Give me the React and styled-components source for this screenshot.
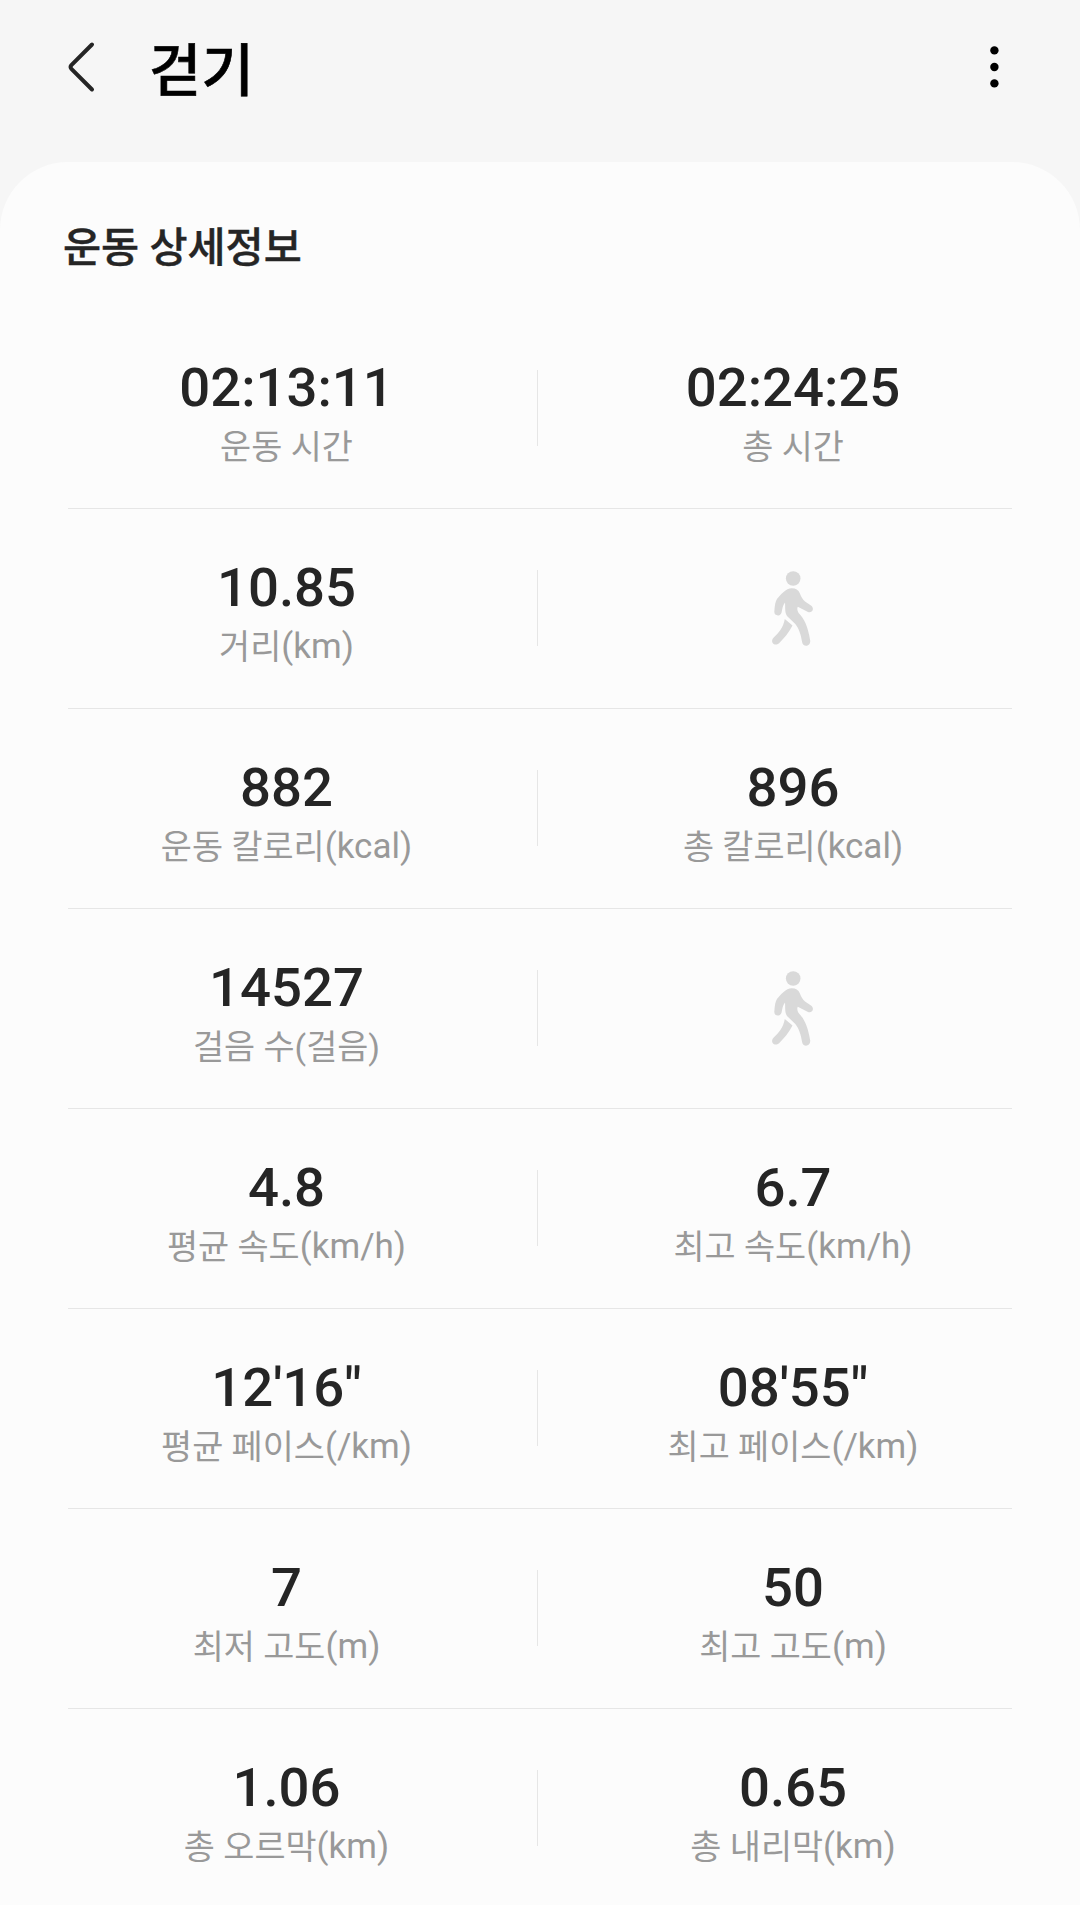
import styled, { createGlobalStyle } from "styled-components";

const GlobalStyle = createGlobalStyle`
  * {
    box-sizing: border-box;
  }
  body {
    margin: 0;
    background: #f6f6f6;
    font-family: Roboto, "Noto Sans CJK KR", sans-serif;
  }
`;

const Page = styled.div`
  width: 1080px;
  height: 1905px;
  overflow: hidden;
  display: flex;
  flex-direction: column;
`;

const Header = styled.header`
  display: flex;
  align-items: center;
  height: 162px;
  padding: 0 76px 28px 59px;
  flex-shrink: 0;
`;

const IconButton = styled.button`
  display: flex;
  padding: 0;
  border: 0;
  background: none;
  cursor: pointer;
`;

const Title = styled.h1`
  flex-grow: 1;
  margin: 0 0 0 46px;
  padding-top: 9px;
  font-size: 57px;
  line-height: 80px;
  font-weight: 500;
  color: #000;
  -webkit-text-stroke: 0.6px #000;
`;

const Card = styled.main`
  flex-grow: 1;
  background: #fcfcfc;
  border-radius: 68px 68px 0 0;
`;

const CardTitle = styled.h2`
  height: 147px;
  margin: 0;
  padding: 56px 0 0 63px;
  font-size: 41.4px;
  line-height: 60px;
  font-weight: 500;
  color: #252525;
  -webkit-text-stroke: 0.4px #252525;
`;

const Row = styled.section`
  display: grid;
  grid-template-columns: 501px 1px 1fr;
  height: 200px;
  padding: 0 32px 0 36px;
`;

const RowLine = styled.hr`
  height: 1px;
  margin: -1px 68px 0;
  border: 0;
  background: #e6e6e6;
`;

const Separator = styled.div`
  height: 76px;
  margin-top: 61px;
  background: #e6e6e6;
`;

const Cell = styled.div`
  display: flex;
  flex-direction: column;
  align-items: center;
  padding-top: ${(props) => (props.$icon ? "60px" : "45px")};
`;

const Value = styled.div`
  font-size: 54.5px;
  line-height: 66px;
  font-weight: 500;
  color: #252525;
`;

const Label = styled.div`
  height: 48px;
  margin-top: 4px;
  font-size: 33.8px;
  line-height: 48px;
  color: #999;
`;

const Unit = styled.span`
  font-size: 35px;
  line-height: 1;
  vertical-align: 1px;
`;

const rows = [
  [
    { value: "02:13:11", label: "운동 시간" },
    { value: "02:24:25", label: "총 시간" },
  ],
  [{ value: "10.85", label: "거리", unit: "(km)" }, null],
  [
    { value: "882", label: "운동 칼로리", unit: "(kcal)" },
    { value: "896", label: "총 칼로리", unit: "(kcal)" },
  ],
  [{ value: "14527", label: "걸음 수(걸음)" }, null],
  [
    { value: "4.8", label: "평균 속도", unit: "(km/h)" },
    { value: "6.7", label: "최고 속도", unit: "(km/h)" },
  ],
  [
    { value: "12'16\"", label: "평균 페이스", unit: "(/km)" },
    { value: "08'55\"", label: "최고 페이스", unit: "(/km)" },
  ],
  [
    { value: "7", label: "최저 고도", unit: "(m)" },
    { value: "50", label: "최고 고도", unit: "(m)" },
  ],
  [
    { value: "1.06", label: "총 오르막", unit: "(km)" },
    { value: "0.65", label: "총 내리막", unit: "(km)" },
  ],
];

function BackIcon() {
  return (
    <svg width="44" height="60" viewBox="0 0 44 60" fill="none">
      <path
        d="M33 7.5L12.4 28.2Q10.8 30 12.4 31.8L33 52.5"
        stroke="#252525"
        strokeWidth="4"
        strokeLinecap="round"
      />
    </svg>
  );
}

function MoreIcon() {
  return (
    <svg width="20" height="60" viewBox="0 0 20 60" fill="#000">
      <circle cx="10.4" cy="13.4" r="4.2" />
      <circle cx="10.4" cy="30" r="4.2" />
      <circle cx="10.4" cy="46.4" r="4.2" />
    </svg>
  );
}

function WalkIcon() {
  return (
    <svg width="110" height="80" viewBox="0 0 110 80" fill="#d9d9d9">
      <circle cx="55.2" cy="9.5" r="7.3" />
      <path d="M53.8 19.3C57.8 19.3 60.4 20.9 61.8 24.2C63.2 27.6 64.4 30.4 67 32.4L73 36.6C77 39.8 74.2 44.4 70 43L59.8 37.8C58.8 39.4 59.4 42 60.6 44C66.4 50 69.8 57 72.2 71.4C72.8 77.3 65.4 78.6 64.2 73.4C62.8 65 60.8 59.5 57.3 55L49 47C46.6 43.8 47.4 38.2 47 33.6C44.8 36 44.2 40.6 43.6 43.4C42.4 48 36 47.2 36.3 42.6C36.8 36.2 37.4 32 39.3 29.6C43 25.8 47.8 19.3 53.8 19.3Z" />
      <path d="M46.8 50L54.5 56.6C51 63.4 46 69.6 41.1 74.2C36.4 78 31.4 72.6 35.7 68.4C40.6 63.8 45 59.6 46.8 50Z" />
    </svg>
  );
}

function Stat({ stat }) {
  if (!stat) {
    return (
      <Cell $icon>
        <WalkIcon />
      </Cell>
    );
  }
  return (
    <Cell>
      <Value>{stat.value}</Value>
      <Label>
        {stat.label}
        {stat.unit && <Unit>{stat.unit}</Unit>}
      </Label>
    </Cell>
  );
}

export default function App() {
  return (
    <>
      <GlobalStyle />
      <Page>
        <Header>
          <IconButton aria-label="뒤로">
            <BackIcon />
          </IconButton>
          <Title>걷기</Title>
          <IconButton aria-label="더보기">
            <MoreIcon />
          </IconButton>
        </Header>
        <Card>
          <CardTitle>운동 상세정보</CardTitle>
          {rows.map(([left, right], index) => (
            <div key={left.label}>
              {index > 0 && <RowLine />}
              <Row>
                <Stat stat={left} />
                <Separator />
                <Stat stat={right} />
              </Row>
            </div>
          ))}
        </Card>
      </Page>
    </>
  );
}
